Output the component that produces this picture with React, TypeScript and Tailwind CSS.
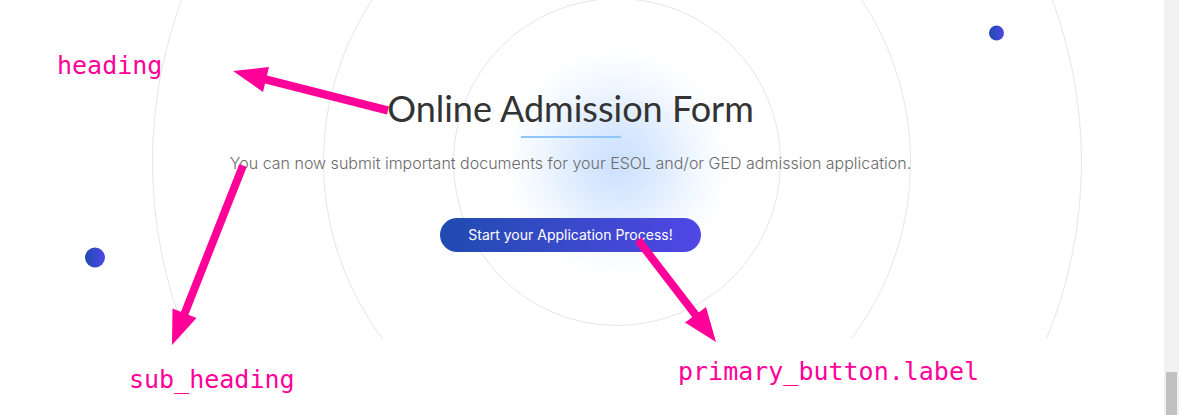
interface Annotation {
  label: string;
  place: string;
}

const annotations: Annotation[] = [
  { label: 'heading', place: 'left-[57px] top-[51px]' },
  { label: 'sub_heading', place: 'left-[129px] top-[365px]' },
  { label: 'primary_button.label', place: 'left-[678px] top-[357px]' },
];

function Backdrop() {
  return (
    <svg
      className="absolute inset-x-0 top-0 w-full h-auto"
      viewBox="0 0 1164 339"
      fill="none"
      aria-hidden="true"
    >
      <defs>
        <radialGradient id="glow">
          <stop offset="0" stopColor="#cce0ff" />
          <stop offset="0.25" stopColor="#d6e7ff" />
          <stop offset="0.5" stopColor="#e5f0ff" />
          <stop offset="0.75" stopColor="#f4f9ff" />
          <stop offset="1" stopColor="#ffffff" />
        </radialGradient>
        <linearGradient id="dot">
          <stop offset="0" stopColor="#1e4bb0" />
          <stop offset="1" stopColor="#4f46e5" />
        </linearGradient>
      </defs>
      <circle cx="617" cy="162" r="114" fill="url(#glow)" />
      <g stroke="#e5e5eb">
        <circle cx="617" cy="162" r="163.5" />
        <circle cx="617" cy="162" r="293.5" />
        <circle cx="617" cy="162" r="464.5" />
      </g>
      <circle cx="996.5" cy="33" r="7.5" fill="url(#dot)" />
      <circle cx="95" cy="257.5" r="10" fill="url(#dot)" />
    </svg>
  );
}

function Arrows() {
  return (
    <svg
      className="absolute inset-x-0 top-0 w-full h-auto pointer-events-none"
      viewBox="0 0 1164 415"
      fill="#ff0099"
      stroke="#ff0099"
      aria-hidden="true"
    >
      <g strokeWidth="8">
        <path d="M388 110.500L264 79" />
        <path d="M243 165.500L184 315" />
        <path d="M638 240L698 318" />
      </g>
      <g stroke="none">
        <path d="M233 71L269 67L263 92Z" />
        <path d="M172 345L172.500 308.500L196.500 318Z" />
        <path d="M716 342L685 322.500L706 307Z" />
      </g>
    </svg>
  );
}

export default function App() {
  return (
    <div className="flex min-h-screen bg-white">
      <main className="relative flex-1 overflow-hidden">
        <Backdrop />

        <section className="relative flex flex-col items-center pt-[84px] pr-[23px] text-center">
          <h1 className="font-['Lato',sans-serif] text-4xl leading-12 font-normal text-[#333333]">
            Online Admission Form
          </h1>
          <div className="mt-1 h-0.5 w-[100px] bg-[#93c5fd]" />
          <p className="mt-[13px] font-['Inter',sans-serif] text-base leading-6 font-light text-[#6b6b6b]">
            You can now submit important documents for your ESOL and/or GED admission application.
          </p>
          <button
            type="button"
            className="mt-[43px] rounded-full bg-linear-to-r from-[#1e4bb0] to-[#4f46e5] px-7 py-[7px] font-['Inter',sans-serif] text-sm leading-5 text-white"
          >
            Start your Application Process!
          </button>
        </section>

        <Arrows />
        {annotations.map((item) => (
          <span
            key={item.label}
            className={`absolute font-['DejaVu_Sans_Mono',monospace] text-[25px] leading-[30px] text-[#ff0099] ${item.place}`}
          >
            {item.label}
          </span>
        ))}
      </main>

      <div className="flex w-[15px] flex-col justify-end bg-[#f1f1f1] px-0.5">
        <div className="h-[43px] bg-[#c1c1c1]" />
      </div>
    </div>
  );
}
